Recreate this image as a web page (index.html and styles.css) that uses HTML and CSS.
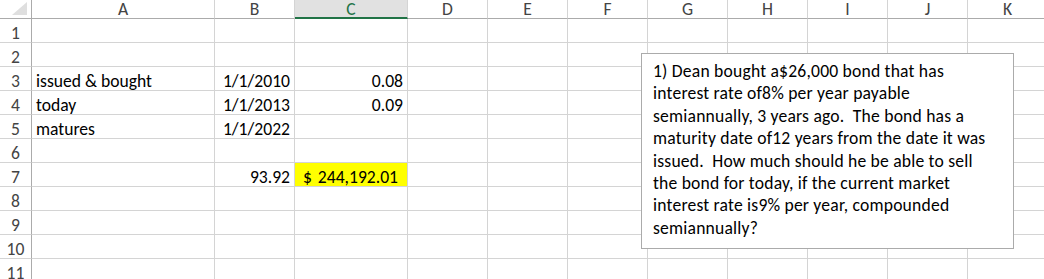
FILE: index.html
```html
<!DOCTYPE html>
<html>
<head>
<meta charset="utf-8">
<link rel="stylesheet" href="styles.css">
</head>
<body>
<div class="sheet">
  <div class="corner"><span class="tri"></span></div>
  <div class="ch">A</div><div class="ch">B</div><div class="ch sel">C</div><div class="ch">D</div><div class="ch">E</div><div class="ch">F</div><div class="ch">G</div><div class="ch">H</div><div class="ch">I</div><div class="ch">J</div><div class="ch">K</div>

  <div class="rh">1</div><div class="c"></div><div class="c"></div><div class="c"></div><div class="c"></div><div class="c"></div><div class="c"></div><div class="c"></div><div class="c"></div><div class="c"></div><div class="c"></div><div class="c"></div>
  <div class="rh">2</div><div class="c"></div><div class="c"></div><div class="c"></div><div class="c"></div><div class="c"></div><div class="c"></div><div class="c"></div><div class="c"></div><div class="c"></div><div class="c"></div><div class="c"></div>
  <div class="rh">3</div><div class="c l">issued &amp; bought</div><div class="c r">1/1/2010</div><div class="c r">0.08</div><div class="c"></div><div class="c"></div><div class="c"></div><div class="c"></div><div class="c"></div><div class="c"></div><div class="c"></div><div class="c"></div>
  <div class="rh">4</div><div class="c l">today</div><div class="c r">1/1/2013</div><div class="c r">0.09</div><div class="c"></div><div class="c"></div><div class="c"></div><div class="c"></div><div class="c"></div><div class="c"></div><div class="c"></div><div class="c"></div>
  <div class="rh">5</div><div class="c l">matures</div><div class="c r">1/1/2022</div><div class="c"></div><div class="c"></div><div class="c"></div><div class="c"></div><div class="c"></div><div class="c"></div><div class="c"></div><div class="c"></div><div class="c"></div>
  <div class="rh">6</div><div class="c"></div><div class="c"></div><div class="c"></div><div class="c"></div><div class="c"></div><div class="c"></div><div class="c"></div><div class="c"></div><div class="c"></div><div class="c"></div><div class="c"></div>
  <div class="rh">7</div><div class="c"></div><div class="c r">93.92</div><div class="c acct"><span>$</span><span>244,192.01</span></div><div class="c"></div><div class="c"></div><div class="c"></div><div class="c"></div><div class="c"></div><div class="c"></div><div class="c"></div><div class="c"></div>
  <div class="rh">8</div><div class="c"></div><div class="c"></div><div class="c"></div><div class="c"></div><div class="c"></div><div class="c"></div><div class="c"></div><div class="c"></div><div class="c"></div><div class="c"></div><div class="c"></div>
  <div class="rh">9</div><div class="c"></div><div class="c"></div><div class="c"></div><div class="c"></div><div class="c"></div><div class="c"></div><div class="c"></div><div class="c"></div><div class="c"></div><div class="c"></div><div class="c"></div>
  <div class="rh">10</div><div class="c"></div><div class="c"></div><div class="c"></div><div class="c"></div><div class="c"></div><div class="c"></div><div class="c"></div><div class="c"></div><div class="c"></div><div class="c"></div><div class="c"></div>
  <div class="rh">11</div><div class="c"></div><div class="c"></div><div class="c"></div><div class="c"></div><div class="c"></div><div class="c"></div><div class="c"></div><div class="c"></div><div class="c"></div><div class="c"></div><div class="c"></div>

  <div class="textbox">
    <span class="ln">1) Dean bought a$26,000 bond that has</span>
    <span class="ln">interest rate of8% per year payable</span>
    <span class="ln">semiannually, 3 years ago.  The bond has a</span>
    <span class="ln">maturity date of12 years from the date it was</span>
    <span class="ln">issued.  How much should he be able to sell</span>
    <span class="ln">the bond for today, if the current market</span>
    <span class="ln">interest rate is9% per year, compounded</span>
    <span class="ln">semiannually?</span>
  </div>
</div>
</body>
</html>
```

FILE: styles.css
```css
html, body {
  margin: 0;
  padding: 0;
  background: #ffffff;
  overflow: hidden;
}

body {
  font-family: Carlito, Lato, "Open Sans", sans-serif;
  font-size: 17.6px;
  color: #000000;
}

.sheet {
  position: relative;
  display: grid;
  grid-template-columns: 32px 183px 80px 113px repeat(8, 80px);
  grid-template-rows: 19px repeat(11, 24px);
  width: 1048px;
}

.sheet > div {
  box-sizing: border-box;
  border-right: 1px solid #d4d4d4;
  border-bottom: 1px solid #d4d4d4;
  min-width: 0;
  white-space: nowrap;
}

.corner {
  display: flex;
  justify-content: flex-end;
  align-items: flex-end;
  padding: 0 4px 3px 0;
  border-right-color: #ababab !important;
  border-bottom-color: #ababab !important;
}

.tri {
  display: block;
  width: 15px;
  height: 13px;
  background: #dfdfdf;
  clip-path: polygon(100% 0, 100% 100%, 0 100%);
}

.ch {
  border-bottom-color: #ababab !important;
  text-align: center;
  color: #444444;
  line-height: 18px;
}

.ch.sel {
  background: #e1e1e1;
  color: #217346;
  border-bottom: 2px solid #217346 !important;
}

.rh {
  border-right-color: #ababab !important;
  color: #444444;
  display: flex;
  justify-content: center;
  align-items: flex-end;
  line-height: 18px;
}

.c {
  display: flex;
  align-items: flex-end;
  line-height: 18px;
}

.c.l {
  padding-left: 4px;
}

.c.r {
  justify-content: flex-end;
  padding-right: 4px;
}

.c.acct {
  background: #ffff00;
  justify-content: space-between;
  padding-left: 8px;
  padding-right: 9px;
}

.textbox {
  position: absolute;
  left: 641px;
  top: 53px;
  width: 373px;
  height: 196px;
  box-sizing: border-box;
  border: 1px solid #ababab !important;
  background: #ffffff;
  padding: 6px 0 0 11px;
  line-height: 22.4px;
  letter-spacing: 0.2px;
}

.ln {
  display: block;
  white-space: pre;
}
```
